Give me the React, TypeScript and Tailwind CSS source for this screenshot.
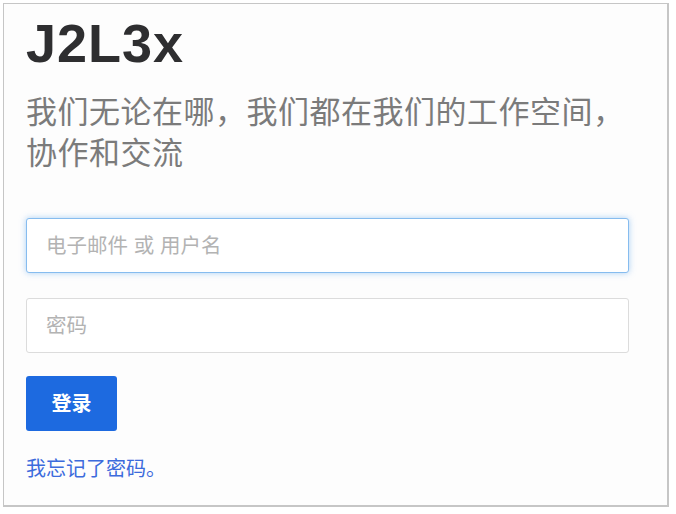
import React from "react";

const cjk = "font-['Liberation_Sans','Noto_Sans_CJK_SC',sans-serif]";

export default function App(): JSX.Element {
  return (
    <div className="w-[676px] h-[514px] bg-white pt-[3px] pl-[3px]">
      <div className={`w-[666px] h-[504px] border border-[#c6c6c6] border-r-2 border-b-2 bg-[#fdfdfd] pl-[22px] pt-[12px] ${cjk}`}>
        <h1 className="text-[54px] leading-[54px] font-bold tracking-[1px] text-[#2e2e30]">J2L3x</h1>

        <p className="mt-[22px] text-[31px] leading-[41px] tracking-[0.5px] text-[#7b7b7b]">
          我们无论在哪，我们都在我们的工作空间，
          <br />
          协作和交流
        </p>

        <form className="mt-[44px] flex flex-col items-start" onSubmit={(e) => e.preventDefault()}>
          <input
            type="text"
            placeholder="电子邮件 或 用户名"
            className="w-[603px] h-[55px] rounded-[3px] border border-[#86bcef] bg-white pl-[19px] text-[20.5px] text-[#333] outline-none shadow-[0_0_6px_rgba(102,170,236,0.55)] placeholder:text-[#b3b3b3]"
          />
          <input
            type="password"
            placeholder="密码"
            className="mt-[25px] w-[603px] h-[55px] rounded-[3px] border border-[#dcdcdc] bg-white pl-[19px] text-[20.5px] text-[#333] outline-none placeholder:text-[#b3b3b3]"
          />
          <button
            type="submit"
            className="mt-[23px] w-[91px] h-[55px] rounded-[3px] bg-[#1d6ae0] text-[20px] font-bold text-white"
          >
            登录
          </button>
          <a href="#" className="mt-[24px] text-[20px] leading-[28px] text-[#3c6bdc]">
            我忘记了密码。
          </a>
        </form>
      </div>
    </div>
  );
}
